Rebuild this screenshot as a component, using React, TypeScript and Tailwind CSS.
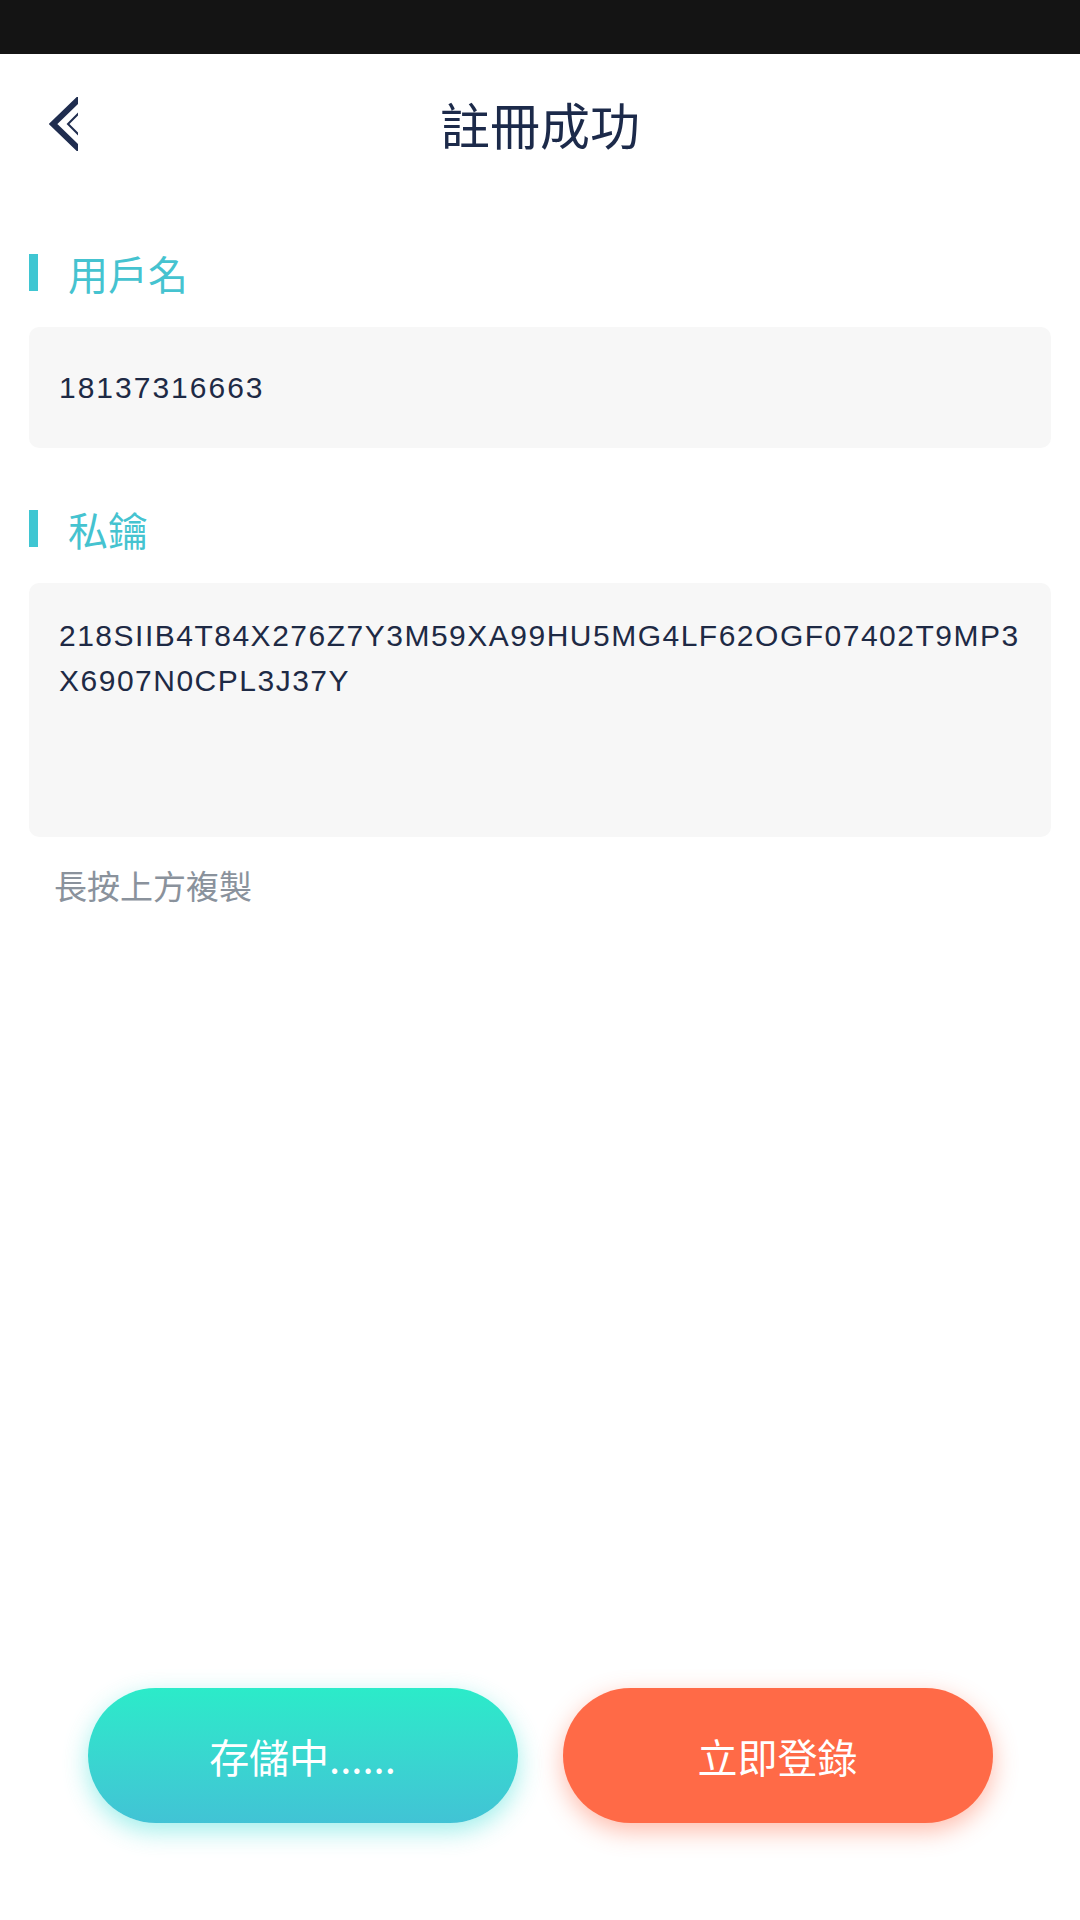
import React from "react";

const cjk = { fontFamily: '"Noto Sans CJK TC", "Noto Sans", sans-serif' };
const latin = { fontFamily: '"Liberation Sans", Arial, sans-serif' };

function BackIcon() {
  return (
    <svg width="29" height="54" viewBox="0 0 29 54" className="block">
      <polyline points="31,1 4,27 31,53" fill="none" stroke="#1f2d4f" strokeWidth="6" strokeLinejoin="miter" />
      <polyline points="31,15 19,27 31,39" fill="none" stroke="#1f2d4f" strokeWidth="2" />
    </svg>
  );
}

function Label({ text }: { text: string }) {
  return (
    <div className="flex items-center h-[37px]">
      <div className="w-[9px] h-[37px] bg-[#3fc6d2]" />
      <span className="ml-[30px] text-[40px] leading-none text-[#45c3d0]" style={cjk}>
        {text}
      </span>
    </div>
  );
}

export default function App() {
  return (
    <div className="w-[1080px] min-h-[1920px] bg-white flex flex-col">
      <div className="h-[54px] bg-[#141414]" />
      <div className="h-[138px] relative flex items-center justify-center">
        <div className="absolute left-[49px] top-[43px]">
          <BackIcon />
        </div>
        <h1 className="text-[50px] leading-none text-[#1c2a4a]" style={cjk}>
          註冊成功
        </h1>
      </div>

      <div className="px-[29px]">
        <div className="mt-[62px]">
          <Label text="用戶名" />
        </div>
        <div className="mt-[36px] h-[121px] rounded-[10px] bg-[#f7f7f7] flex items-center px-[30px]">
          <span className="text-[30px] tracking-[2px] text-[#1e2a45]" style={latin}>
            18137316663
          </span>
        </div>

        <div className="mt-[62px]">
          <Label text="私鑰" />
        </div>
        <div className="mt-[36px] h-[254px] rounded-[10px] bg-[#f7f7f7] px-[30px] pt-[30px]">
          <div className="text-[30px] leading-[45px] tracking-[1.5px] text-[#1e2a45]" style={latin}>
            <div>218SIIB4T84X276Z7Y3M59XA99HU5MG4LF62OGF07402T9MP3</div>
            <div>X6907N0CPL3J37Y</div>
          </div>
        </div>
        <p className="mt-[30px] pl-[25px] text-[33px] leading-[36px] text-[#8a929c]" style={cjk}>
          長按上方複製
        </p>
      </div>

      <div className="flex-1" />

      <div className="flex justify-center gap-[45px] pb-[97px]">
        <button
          className="w-[430px] h-[135px] rounded-full bg-gradient-to-b from-[#2bebc9] to-[#41c3d5] text-white text-[40px] shadow-[0_8px_24px_rgba(43,220,210,0.45)]"
          style={cjk}
        >
          存儲中......
        </button>
        <button
          className="w-[430px] h-[135px] rounded-full bg-[#ff6a47] text-white text-[40px] shadow-[0_8px_24px_rgba(255,106,71,0.45)]"
          style={cjk}
        >
          立即登錄
        </button>
      </div>
    </div>
  );
}
